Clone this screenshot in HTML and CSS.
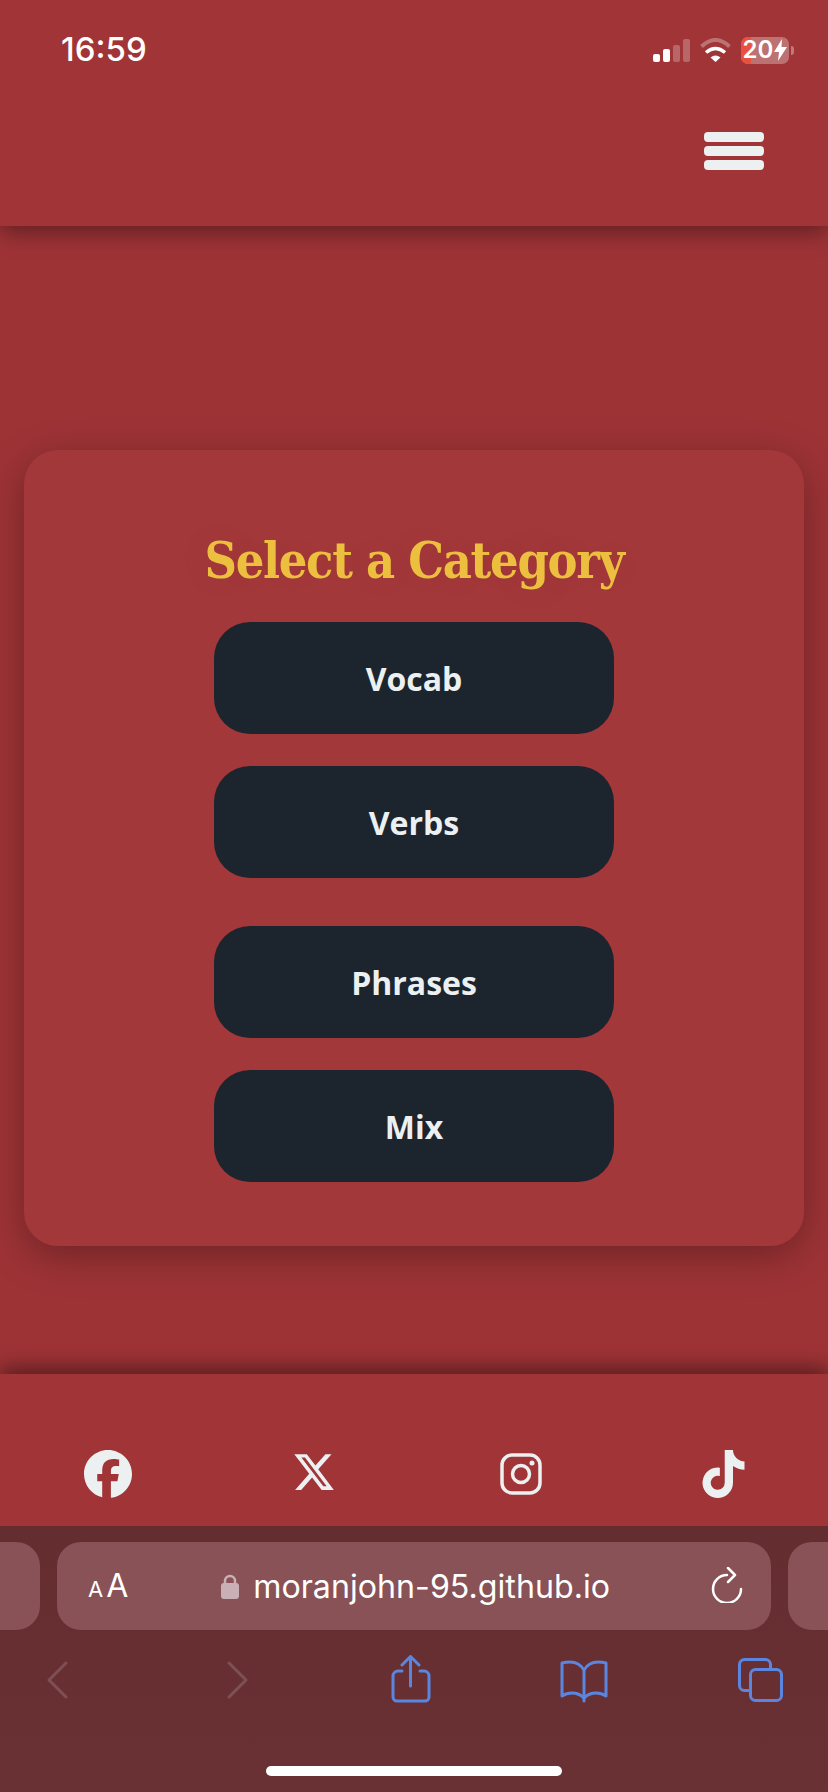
FILE: index.html
```html
<!DOCTYPE html>
<html lang="en">
<head>
  <meta charset="UTF-8">
  <title>Select a Category</title>
  <link rel="stylesheet" href="styles.css">
</head>
<body>
  <header class="cabecera">
    <div class="estado">
      <span class="hora">16:59</span>
      <div class="estado-iconos">
        <svg class="senal" width="37" height="23" viewBox="0 0 37 23">
          <rect x="0" y="15" width="7" height="8" rx="2" fill="#fff"/>
          <rect x="10" y="10" width="7" height="13" rx="2" fill="#fff"/>
          <rect x="20" y="6" width="7" height="17" rx="2" fill="#fff" opacity=".25"/>
          <rect x="30" y="0" width="7" height="23" rx="2" fill="#fff" opacity=".25"/>
        </svg>
        <svg class="wifi" width="31" height="24" viewBox="0 0 31 24">
          <path d="M1.5 8.5Q15.5-4.500 29.500 8.500" fill="none" stroke="#fff" stroke-width="4" opacity=".3"/>
          <path d="M6 14.500Q15.500 6.500 25 14.500" fill="none" stroke="#fff" stroke-width="3.500"/>
          <path d="M10.500 19.500Q15.500 15.500 20.500 19.500L15.500 24Z" fill="#fff"/>
        </svg>
        <div class="bateria">
          <span class="bateria-num">20</span>
          <svg width="13" height="22" viewBox="0 0 13 22"><path d="M8 0L0 13h5l-1 9 9-14H7.500Z" fill="#fff"/></svg>
        </div>
      </div>
    </div>
    <button class="menu" type="button" aria-label="Menu">
      <span></span>
      <span></span>
      <span></span>
    </button>
  </header>

  <main class="contenido">
    <section class="tarjeta">
      <h2>Select a Category</h2>
      <div class="grupo">
        <button type="button" class="categoria">Vocab</button>
        <button type="button" class="categoria">Verbs</button>
      </div>
      <div class="grupo">
        <button type="button" class="categoria">Phrases</button>
        <button type="button" class="categoria">Mix</button>
      </div>
    </section>
  </main>

  <footer class="pie">
    <svg width="48" height="48" viewBox="0 0 512 512"><path d="M512 256C512 114.600 397.400 0 256 0S0 114.600 0 256C0 376 82.700 476.800 194.200 504.500V334.200H141.400V256h52.800V222.300c0-87.100 39.400-127.500 125-127.500c16.200 0 44.200 3.200 55.700 6.400V172c-6-.6-16.500-1-29.600-1c-42 0-58.200 15.900-58.200 57.200V256h83.600l-14.400 78.200H287V510.100C413.800 494.800 512 386.900 512 256z"/></svg>
    <svg width="44" height="44" viewBox="0 0 512 512"><path d="M389.200 48h70.600L305.600 224.200 487 464H345L233.700 318.600 106.500 464H35.800L200.700 275.500 26.800 48H172.400L272.900 180.900 389.200 48zM364.400 421.800h39.100L151.100 88h-42L364.400 421.800z"/></svg>
    <svg class="insta" width="42" height="42" viewBox="0 0 42 42">
      <rect x="2" y="2" width="38" height="38" rx="10" fill="none" stroke-width="3.500"/>
      <circle cx="21" cy="21" r="8.500" fill="none" stroke-width="3.500"/>
      <circle cx="32" cy="10" r="2.500" class="insta-punto"/>
    </svg>
    <svg width="43" height="48" viewBox="0 0 448 512"><path d="M448 209.910a210.060 210.060 0 0 1-122.770-39.250V349.380A162.550 162.550 0 1 1 185 188.310V278.200a74.620 74.620 0 1 0 52.230 71.180V0l88 0a121.180 121.180 0 0 0 1.860 22.170h0A122.180 122.180 0 0 0 381 102.390a121.430 121.430 0 0 0 67 20.140Z"/></svg>
  </footer>

  <div class="navegador">
    <div class="barra">
      <div class="pestana pestana-izq"></div>
      <div class="direccion">
        <span class="tamano"><small>A</small>A</span>
        <span class="url">
          <svg width="18" height="26" viewBox="0 0 18 26">
            <path d="M4 12V8a5 5 0 0 1 10 0v4" fill="none" stroke="#c8b0b6" stroke-width="2.500"/>
            <rect x="0" y="10" width="18" height="16" rx="3" fill="#c8b0b6"/>
          </svg>
          moranjohn-95.github.io
        </span>
        <svg class="recargar" width="32" height="36" viewBox="0 0 32 36">
          <path d="M16 8A14 14 0 1 0 30 22" fill="none" stroke="#fff" stroke-width="2.500" stroke-linecap="round"/>
          <path d="M17 1l7 7-7 7" fill="none" stroke="#fff" stroke-width="2.500" stroke-linecap="round" stroke-linejoin="round"/>
        </svg>
      </div>
      <div class="pestana pestana-der"></div>
    </div>
    <div class="herramientas">
      <svg class="apagado" width="80" height="50" viewBox="0 0 80 50"><path d="M49 8L32 25l17 17"/></svg>
      <svg class="apagado" width="80" height="50" viewBox="0 0 80 50"><path d="M36 8l17 17-17 17"/></svg>
      <svg class="activo" width="80" height="50" viewBox="0 0 80 50">
        <path d="M33 16h-4a5 5 0 0 0-5 5v21a4 4 0 0 0 4 4h28a4 4 0 0 0 4-4V21a5 5 0 0 0-5-5h-4"/>
        <path d="M41.500 31V2M33 10l8.500-8.500L50 10"/>
      </svg>
      <svg class="activo" width="80" height="50" viewBox="0 0 80 50">
        <path d="M40 15c-3-5-8-8-14-8-3 0-6 .5-8 1v33c3-2 6-3 10-3 5 0 9 2 12 5 3-3 7-5 12-5 4 0 7 1 10 3V8c-2-.5-5-1-8-1-6 0-11 3-14 8z"/>
        <path d="M40 15v31"/>
      </svg>
      <svg class="activo" width="80" height="50" viewBox="0 0 80 50">
        <rect x="30.500" y="14.500" width="31" height="31" rx="5"/>
        <path d="M29 35.500h-4.500a5 5 0 0 1-5-5V9.500a5 5 0 0 1 5-5h21a5 5 0 0 1 5 5v4"/>
      </svg>
    </div>
    <div class="indicador"></div>
  </div>
</body>
</html>
```

FILE: styles.css
```css
* {
  box-sizing: border-box;
}

body {
  margin: 0;
  height: 1792px;
  display: flex;
  flex-direction: column;
  background: #9e3336;
  font-family: "Open Sans", sans-serif;
  overflow: hidden;
}

.cabecera {
  position: relative;
  z-index: 2;
  height: 226px;
  background: #a03437;
  box-shadow: 0 6px 22px rgba(0, 0, 0, 0.4);
  display: flex;
  flex-direction: column;
}

.estado {
  height: 100px;
  padding: 0 34px 0 61px;
  display: flex;
  justify-content: space-between;
  align-items: center;
  color: #fff;
}

.hora {
  margin-top: -2px;
  font-family: Inter, sans-serif;
  font-size: 33px;
  font-weight: 500;
}

.estado-iconos {
  display: flex;
  align-items: center;
  gap: 10px;
}

.bateria {
  position: relative;
  width: 48px;
  height: 27px;
  margin-right: 5px;
  border-radius: 7px;
  background: rgba(255, 255, 255, 0.3);
  display: flex;
  align-items: center;
  justify-content: center;
  gap: 1px;
}

.bateria::before {
  content: "";
  position: absolute;
  left: 0;
  top: 0;
  bottom: 0;
  width: 10px;
  border-radius: 7px 0 0 7px;
  background: #e8503f;
}

.bateria::after {
  content: "";
  position: absolute;
  right: -5px;
  top: 9px;
  width: 3px;
  height: 9px;
  border-radius: 0 3px 3px 0;
  background: rgba(255, 255, 255, 0.35);
}

.bateria-num {
  position: relative;
  font-family: Inter, sans-serif;
  font-size: 24px;
  font-weight: 600;
  line-height: 1;
}

.bateria svg {
  position: relative;
}

.menu {
  align-self: flex-end;
  width: 60px;
  margin: 32px 64px 0 0;
  padding: 0;
  border: none;
  background: none;
  display: flex;
  flex-direction: column;
  gap: 4px;
}

.menu span {
  height: 10px;
  border-radius: 4px;
  background: #ecf0f1;
}

.contenido {
  flex: 1;
  padding: 224px 24px 0;
}

.tarjeta {
  height: 796px;
  padding: 81px 0 0;
  border-radius: 34px;
  background: #a3383b;
  box-shadow: 0 10px 40px rgba(0, 0, 0, 0.3);
  display: flex;
  flex-direction: column;
  align-items: center;
  gap: 48px;
}

h2 {
  margin: 0 0 -17px;
  height: 60px;
  font-family: "DejaVu Serif Condensed", "DejaVu Serif", serif;
  font-size: 50px;
  font-weight: 700;
  letter-spacing: -1.3px;
  line-height: 60px;
  color: #ecbf3f;
  text-shadow: 0 0 60px rgba(0, 0, 0, 0.08);
}

.grupo {
  display: flex;
  flex-direction: column;
  gap: 32px;
}

.categoria {
  width: 400px;
  height: 112px;
  border: none;
  border-radius: 36px;
  background: #1c252e;
  color: #ecf0f1;
  font-family: "Open Sans", sans-serif;
  font-size: 32px;
  font-weight: 700;
}

.pie {
  position: relative;
  z-index: 2;
  height: 152px;
  padding: 76px 83px 0 84px;
  background: #a03437;
  box-shadow: 0 -6px 20px rgba(0, 0, 0, 0.45);
  display: flex;
  justify-content: space-between;
  align-items: flex-start;
}

.pie svg {
  fill: #ecf0f1;
  stroke: none;
}

.pie .insta {
  margin: 3px 0 0 3px;
  fill: none;
  stroke: #ecf0f1;
}

.pie .insta-punto {
  fill: #ecf0f1;
  stroke: none;
}

.navegador {
  position: relative;
  z-index: 3;
  height: 266px;
  padding-top: 16px;
  background: linear-gradient(#642d30, #6a3134);
  display: flex;
  flex-direction: column;
}

.barra {
  height: 88px;
  display: flex;
  gap: 17px;
}

.pestana {
  width: 40px;
  background: #885256;
}

.pestana-izq {
  border-radius: 0 24px 24px 0;
}

.pestana-der {
  border-radius: 24px 0 0 24px;
}

.direccion {
  flex: 1;
  padding: 0 28px 0 31px;
  border-radius: 24px;
  background: #885256;
  color: #fff;
  font-family: Inter, sans-serif;
  display: flex;
  justify-content: space-between;
  align-items: center;
}

.tamano {
  font-size: 32px;
  line-height: 1;
}

.tamano small {
  font-size: 22px;
  margin-right: 3px;
}

.url {
  margin-right: 8px;
  font-size: 32.2px;
  display: flex;
  align-items: center;
  gap: 14px;
}

.recargar {
  margin: -2px 0 0;
}

.herramientas {
  padding: 25px 28px 0 17px;
  display: flex;
  justify-content: space-between;
}

.herramientas svg {
  fill: none;
  stroke-width: 3;
  stroke-linecap: round;
  stroke-linejoin: round;
}

.apagado {
  stroke: #7d5154;
}

.activo {
  stroke: #5b86e0;
}

.indicador {
  width: 296px;
  height: 10px;
  margin: 61px auto 0;
  border-radius: 5px;
  background: #fff;
}
```
